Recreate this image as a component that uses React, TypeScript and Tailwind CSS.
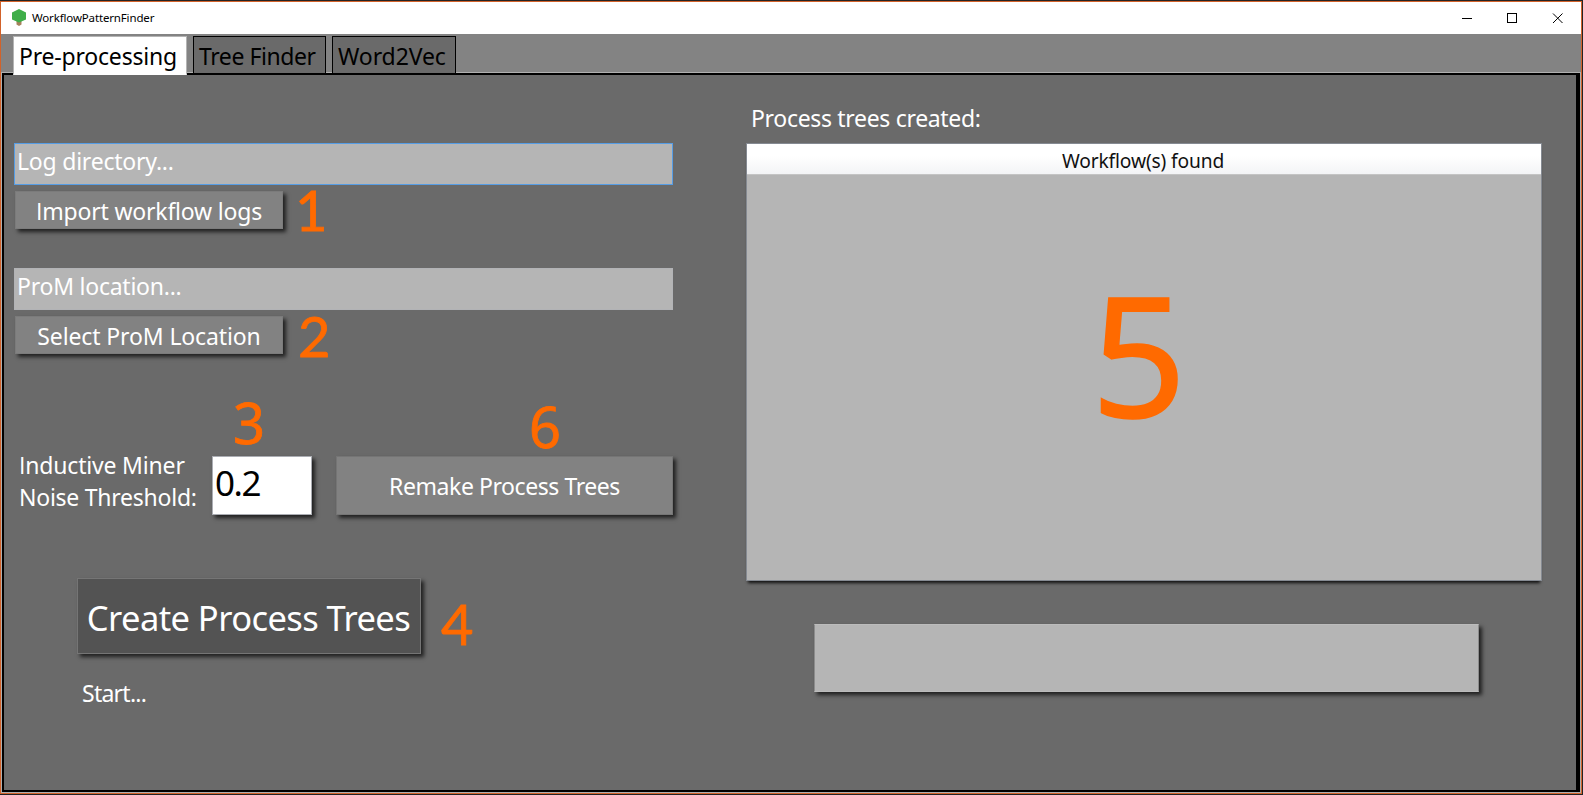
import type { ReactNode } from "react";

const shadow = "shadow-[3px_3px_4px_rgba(0,0,0,0.7)]";

function Tab({ children, className }: { children: ReactNode; className: string }) {
  return (
    <div className={`border whitespace-nowrap text-black leading-[30px] pt-[4px] ${className}`}>
      {children}
    </div>
  );
}

function Field({ text, className }: { text: string; className: string }) {
  return (
    <div className={`h-[42px] w-[659px] border bg-[#b5b5b5] pl-[2px] pt-[2px] leading-[30px] ${className}`}>
      {text}
    </div>
  );
}

function Button({ children, className }: { children: ReactNode; className: string }) {
  return (
    <button
      className={`flex items-center justify-center border whitespace-nowrap ${shadow} ${className}`}
    >
      {children}
    </button>
  );
}

function Mark({ n, className }: { n: number; className: string }) {
  return (
    <span className={`absolute leading-none text-[#ff6a00] ${className}`}>{n}</span>
  );
}

function TitleBar() {
  return (
    <header className="flex h-8 shrink-0 items-center bg-white pl-[11px] text-black">
      <svg width="14" height="17" viewBox="0 0 14 17" className="-mt-px shrink-0">
        <path d="M4.500 11h5v4.500l-2.500 1.500-2.500-1.500z" fill="#a5825c" />
        <path d="M7 0l7 3.500v7l-7 3-7-3v-7z" fill="#3fae49" />
      </svg>
      <span className="ml-[6px] text-[11.500px] tracking-[-0.15px]">WorkflowPatternFinder</span>
      <svg
        width="101"
        height="11"
        viewBox="0 0 101 11"
        fill="none"
        stroke="#000"
        className="mr-[18px] ml-auto"
      >
        <path d="M0 5.500h10" />
        <rect x="45.500" y="0.500" width="9" height="9" />
        <path d="M91 .5l9.500 9.500M100.500 .5L91 10" />
      </svg>
    </header>
  );
}

export default function App() {
  return (
    <div className="h-[795px] w-[1583px] overflow-hidden bg-[#242424] pt-px pr-px pb-px font-['Noto_Sans','Open_Sans',sans-serif] text-[23px] text-white">
      <div className="relative flex h-[793px] flex-col border border-[#d2622a] bg-[#838383]">
        <TitleBar />
        <nav className="relative z-10 -mb-[3px] flex h-[41px] shrink-0 items-start pt-[2px] pl-3">
          <Tab className="h-[39px] w-[174px] border-[#b4b4b4] border-b-white bg-white pl-[5px] tracking-[-0.2px]">
            Pre-processing
          </Tab>
          <Tab className="ml-[6px] h-[38px] w-[133px] border-black bg-[#6a6a6a] pl-[5px] tracking-[-0.42px]">
            Tree Finder
          </Tab>
          <Tab className="ml-[6px] h-[38px] w-[124px] border-black bg-[#6a6a6a] pl-[5px] tracking-[-0.1px]">
            Word2Vec
          </Tab>
        </nav>
        <div className="flex min-h-0 flex-1 border border-[#b0b0b0]">
          <main className="flex flex-1 border-t-2 border-r-4 border-b-2 border-l-2 border-black bg-[#6a6a6a]">
            <section className="flex w-[732px] shrink-0 flex-col items-start pt-[68px] pl-[10px]">
              <Field text="Log directory..." className="border-[#569de5] tracking-[-0.22px]" />
              <Button className="mt-[6px] ml-px h-[38px] w-[268px] border-[#7b7b7b] bg-[#828282] pt-[2px] tracking-[-0.2px]">
                <span>
                  <span className="font-['Open_Sans']">I</span>mport workflow logs
                </span>
              </Button>
              <Field text="ProM location..." className="mt-[39px] border-[#b2b3b6] tracking-[-0.24px]" />
              <Button className="mt-[6px] ml-px h-[38px] w-[268px] border-[#7b7b7b] bg-[#828282] pt-[2px] tracking-[-0.12px]">
                Select ProM Location
              </Button>
              <div className="mt-[102px] flex h-[59px] items-start">
                <div className="-mt-[7px] ml-[5px] w-[193px] leading-8 whitespace-nowrap">
                  <div className="tracking-[-0.18px]">
                    <span className="font-['Open_Sans']">I</span>nductive Miner
                  </div>
                  <div className="tracking-[-0.25px]">Noise Threshold:</div>
                </div>
                <div
                  className={`h-[59px] w-[100px] border border-[#abadb3] bg-white pl-[2px] pt-[1px] text-[35px] leading-[50px] tracking-[-1.5px] text-black ${shadow}`}
                >
                  0.2
                </div>
                <Button className="ml-[24px] h-[59px] w-[337px] border-[#757575] bg-[#828282] pt-px tracking-[-0.43px]">
                  Remake Process Trees
                </Button>
              </div>
              <Button className="mt-[63px] ml-[63px] h-[76px] w-[344px] border-[#757575] bg-[#535353] pt-[4px] pr-px text-[34.500px] tracking-[-0.58px]">
                Create Process Trees
              </Button>
              <div className="mt-6 ml-[68px] leading-[30px] tracking-[-0.75px]">Start...</div>
            </section>
            <section className="flex flex-col items-start pt-7 pl-[10px]">
              <div className="ml-[5px] h-10 leading-[30px] tracking-[-0.32px]">Process trees created:</div>
              <div className="h-[438px] w-[796px] border border-[#858a92] bg-[#b5b5b5] shadow-[0_4px_3px_-2px_rgba(0,0,0,0.85)]">
                <div className="flex h-[31px] items-center justify-center border-b border-[#c4c4c4] bg-linear-to-b from-white from-40% to-[#f3f4f6] pt-[4px] pr-[2px] text-[19.200px] tracking-[-0.14px] text-[#111]">
                  Workflow(s) found
                </div>
              </div>
              <div
                className={`mt-[43px] ml-[68px] h-[68px] w-[665px] border border-[#bcbcbc] border-r-[#8c8c8c] border-l-[#8c8c8c] bg-[#b5b5b5] ${shadow}`}
              />
            </section>
          </main>
        </div>
        <Mark n={1} className="top-[180px] left-[294px] font-['Lato'] text-[56px] [-webkit-text-stroke:0.8px_#ff6a00]" />
        <Mark n={2} className="top-[306px] left-[297px] font-['Lato'] text-[56px] [-webkit-text-stroke:0.8px_#ff6a00]" />
        <Mark n={3} className="top-[392px] left-[232px] font-['Noto_Sans'] text-[56px] [-webkit-text-stroke:0.8px_#ff6a00]" />
        <Mark n={6} className="top-[396px] left-[528px] font-['Noto_Sans'] text-[56px] [-webkit-text-stroke:0.8px_#ff6a00]" />
        <Mark n={4} className="top-[594px] left-[440px] font-['Lato'] text-[56px] [-webkit-text-stroke:0.8px_#ff6a00]" />
        <Mark n={5} className="top-[267px] left-[1090px] font-['Noto_Sans'] text-[167px] [-webkit-text-stroke:1.5px_#ff6a00]" />
      </div>
    </div>
  );
}
